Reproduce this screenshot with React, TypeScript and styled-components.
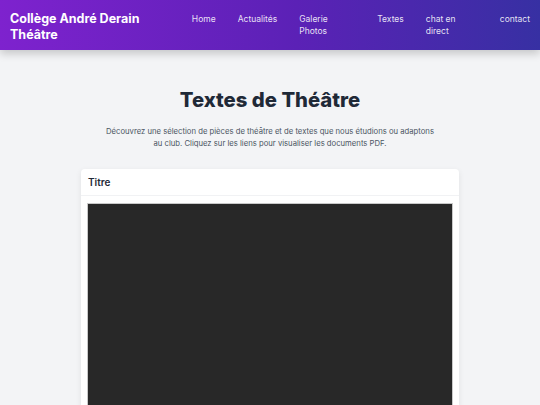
import styled, { createGlobalStyle } from 'styled-components';

const GlobalStyle = createGlobalStyle`
  * {
    box-sizing: border-box;
  }
  body {
    margin: 0;
    background: #f3f4f6;
    font-family: Inter, 'Liberation Sans', sans-serif;
    color: #1f2937;
  }
`;

const links = [
  { label: 'Home' },
  { label: 'Actualités' },
  { label: 'Galerie Photos', width: 56 },
  { label: 'Textes' },
  { label: 'chat en direct', width: 52 },
  { label: 'contact' },
];

export default function App() {
  return (
    <>
      <GlobalStyle />
      <Header>
        <Brand>
          Collège André Derain
          <br />
          Théâtre
        </Brand>
        <Nav>
          {links.map((l) => (
            <NavLink key={l.label} href="#" $width={l.width}>
              {l.label}
            </NavLink>
          ))}
        </Nav>
      </Header>
      <Main>
        <Title>Textes de Théâtre</Title>
        <Intro>
          Découvrez une sélection de pièces de théâtre et de textes que nous
          étudions ou adaptons au club. Cliquez sur les liens pour visualiser
          les documents PDF.
        </Intro>
        <Card>
          <CardHeader>Titre</CardHeader>
          <CardBody>
            <Viewer />
          </CardBody>
        </Card>
      </Main>
    </>
  );
}

const Header = styled.header`
  display: flex;
  justify-content: space-between;
  align-items: flex-start;
  height: 50px;
  padding: 11px 10px 0 10px;
  background: linear-gradient(90deg, #7e22ce 0%, #5b21b6 55%, #3730a3 100%);
  box-shadow: 0 4px 8px rgba(0, 0, 0, 0.18);
  position: relative;
  z-index: 1;
`;

const Brand = styled.div`
  color: #fff;
  font-weight: 700;
  font-size: 12.5px;
  line-height: 15.5px;
`;

const Nav = styled.nav`
  display: flex;
  gap: 22px;
  padding-top: 2px;
`;

const NavLink = styled.a<{ $width?: number }>`
  flex: none;
  color: rgba(255, 255, 255, 0.88);
  text-decoration: none;
  font-size: 8.5px;
  line-height: 12px;
  width: ${(p) => (p.$width ? `${p.$width}px` : 'auto')};
`;

const Main = styled.main`
  display: flex;
  flex-direction: column;
  align-items: center;
  padding-top: 36px;
`;

const Title = styled.h1`
  margin: 0;
  font-size: 20.3px;
  line-height: 28px;
  font-weight: 800;
  color: #1f2937;
`;

const Intro = styled.p`
  margin: 12px 0 0;
  max-width: 334px;
  text-align: center;
  font-size: 7.7px;
  line-height: 12px;
  color: #4b5563;
`;

const Card = styled.section`
  margin-top: 19px;
  width: 378px;
  background: #fff;
  border-radius: 4px;
  box-shadow: 0 2px 6px rgba(0, 0, 0, 0.08);
`;

const CardHeader = styled.h2`
  margin: 0;
  padding: 7px 7px 6px;
  font-size: 10px;
  line-height: 13px;
  font-weight: 600;
  color: #1f2937;
  border-bottom: 1px solid #f1f2f4;
`;

const CardBody = styled.div`
  padding: 7px 6px;
`;

const Viewer = styled.div`
  height: 240px;
  background: #282828;
  border: 1px solid #c9c9c9;
`;
